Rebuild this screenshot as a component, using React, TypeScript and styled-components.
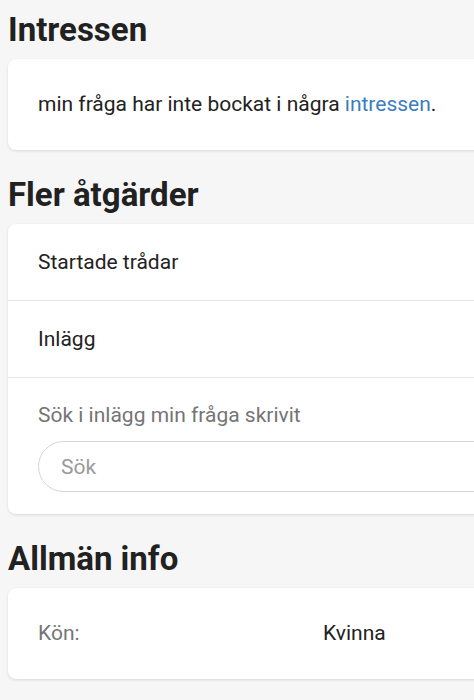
import styled, { createGlobalStyle } from 'styled-components';

const GlobalStyle = createGlobalStyle`
    html, body {
        margin: 0;
        padding: 0;
        background: #f6f6f6;
        overflow: hidden;
    }
    body {
        font-family: Roboto, "Noto Sans", sans-serif;
        color: #222;
    }
`;

const Page = styled.div`
    width: 640px;
    padding: 10px 8px 0;
    box-sizing: border-box;
`;

const Heading = styled.h2`
    margin: 0 0 10px;
    font-size: 33px;
    line-height: 39px;
    font-weight: 700;
    color: #212121;
`;

const Card = styled.div`
    background: #fff;
    border-radius: 8px;
    box-shadow: 0 1px 3px rgba(0, 0, 0, 0.12);
    margin-bottom: 25px;
    overflow: hidden;
`;

const Message = styled.p`
    margin: 0;
    padding: 33px 30px;
    font-size: 21px;
    line-height: 25px;
`;

const Link = styled.a`
    color: #3b7dbd;
    text-decoration: none;
`;

const Row = styled.div`
    padding: 26px 30px 25px;
    font-size: 21px;
    line-height: 25px;
    border-bottom: 1px solid #e6e6e6;
`;

const SearchBlock = styled.div`
    padding: 25px 30px 22px;
`;

const Label = styled.div`
    font-size: 21px;
    line-height: 25px;
    color: #757575;
    margin-bottom: 13px;
`;

const SearchInput = styled.input`
    display: block;
    width: 100%;
    height: 51px;
    box-sizing: border-box;
    border: 1px solid #d4d4d4;
    border-radius: 26px;
    padding: 0 22px;
    font-family: inherit;
    font-size: 21px;
    color: #222;
    background: #fff;
    outline: none;

    &::placeholder {
        color: #9a9a9a;
    }
`;

const InfoRow = styled.div`
    display: grid;
    grid-template-columns: 285px 1fr;
    padding: 33px 30px;
    font-size: 21px;
    line-height: 25px;
`;

const InfoKey = styled.span`
    color: #757575;
`;

const App = () => (
    <>
        <GlobalStyle />
        <Page>
            <Heading>Intressen</Heading>
            <Card>
                <Message>
                    min fråga har inte bockat i några <Link href="#">intressen</Link>.
                </Message>
            </Card>

            <Heading>Fler åtgärder</Heading>
            <Card>
                <Row>Startade trådar</Row>
                <Row>Inlägg</Row>
                <SearchBlock>
                    <Label>Sök i inlägg min fråga skrivit</Label>
                    <SearchInput placeholder="Sök" />
                </SearchBlock>
            </Card>

            <Heading>Allmän info</Heading>
            <Card>
                <InfoRow>
                    <InfoKey>Kön:</InfoKey>
                    <span>Kvinna</span>
                </InfoRow>
            </Card>
        </Page>
    </>
);

export default App;
